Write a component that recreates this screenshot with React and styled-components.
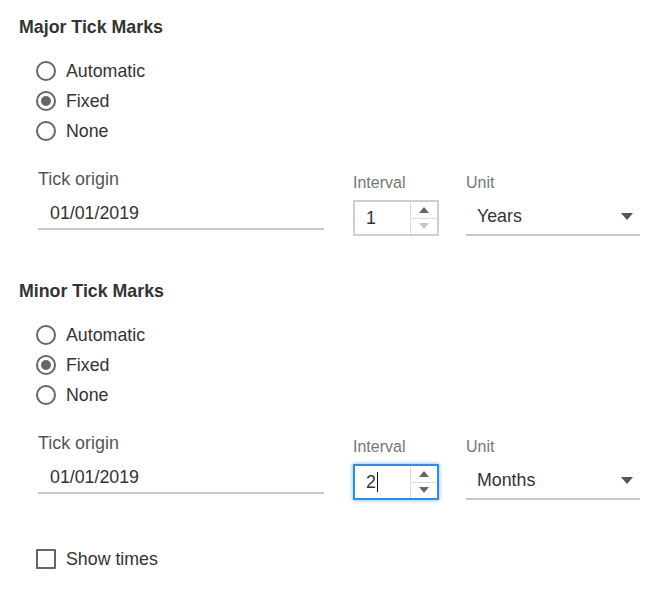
import React from 'react';
import styled, { createGlobalStyle } from 'styled-components';

const GlobalStyle = createGlobalStyle`
  body {
    margin: 0;
    background: #fff;
    font-family: "Liberation Sans", Arial, sans-serif;
    color: #333;
  }
`;

const Page = styled.div`
  padding: 17px 0 0 19px;
  width: 661px;
  box-sizing: border-box;
`;

const Section = styled.section`
  margin-bottom: ${(p) => p.$gap || 0}px;
`;

const Title = styled.div`
  font-size: 17.8px;
  font-weight: bold;
  line-height: 20px;
  color: #333;
`;

const RadioGroup = styled.div`
  display: flex;
  flex-direction: column;
  padding: 19px 0 0 17px;
`;

const OptionRow = styled.label`
  display: flex;
  align-items: center;
  height: 30px;
  gap: 10px;
  font-size: 17.8px;
  color: #333;
`;

const RadioCircle = styled.span`
  width: 20px;
  height: 20px;
  box-sizing: border-box;
  border: 2px solid #666;
  border-radius: 50%;
  display: flex;
  align-items: center;
  justify-content: center;
  &::after {
    content: '';
    width: 10px;
    height: 10px;
    border-radius: 50%;
    background: ${(p) => (p.$checked ? '#666' : 'transparent')};
  }
`;

const CheckBox = styled.span`
  width: 20px;
  height: 20px;
  box-sizing: border-box;
  border: 2px solid #666;
  border-radius: 1px;
`;

const FieldRow = styled.div`
  display: flex;
  align-items: flex-start;
  padding-left: 19px;
`;

const Field = styled.div`
  display: flex;
  flex-direction: column;
  width: ${(p) => p.$width}px;
  margin-left: ${(p) => p.$left || 0}px;
  margin-top: ${(p) => p.$top}px;
`;

const FieldLabel = styled.div`
  line-height: 20px;
  font-size: ${(p) => (p.$small ? '16px' : '17.9px')};
  color: ${(p) => (p.$small ? '#777' : '#555')};
  margin-bottom: 7px;
`;

const TextInput = styled.div`
  height: 34px;
  box-sizing: border-box;
  border-bottom: 2px solid #c8c8c8;
  padding: 2px 0 0 12px;
  display: flex;
  align-items: center;
  font-size: 17.8px;
  color: #333;
`;

const Spin = styled.div`
  height: 36px;
  box-sizing: border-box;
  display: flex;
  border: 2px solid ${(p) => (p.$focused ? '#2f8ee3' : '#cfcfcf')};
  box-shadow: ${(p) => (p.$focused ? '0 0 4px rgba(47,142,227,0.7)' : 'none')};
`;

const SpinValue = styled.div`
  flex: 1;
  display: flex;
  align-items: center;
  padding-left: 11px;
  font-size: 17.8px;
  color: #333;
`;

const Caret = styled.span`
  display: inline-block;
  width: 1px;
  height: 20px;
  background: #111;
  margin-left: 1px;
`;

const SpinButtons = styled.div`
  width: 26px;
  display: flex;
  flex-direction: column;
  border-left: 1px solid #ddd;
`;

const SpinButton = styled.div`
  flex: 1;
  display: flex;
  align-items: center;
  justify-content: center;
  & + & {
    border-top: 1px solid #ddd;
  }
`;

const Select = styled.div`
  height: 36px;
  box-sizing: border-box;
  border-bottom: 2px solid #c8c8c8;
  display: flex;
  align-items: center;
  justify-content: space-between;
  padding: 0 7px 2px 11px;
  font-size: 17.8px;
  color: #333;
`;

const Triangle = ({ up, color, w = 10, h = 6 }) => (
  <svg width={w} height={h} viewBox={`0 0 ${w} ${h}`}>
    <polygon
      points={up ? `0,${h} ${w / 2},0 ${w},${h}` : `0,0 ${w},0 ${w / 2},${h}`}
      fill={color}
    />
  </svg>
);

const TickSection = ({ title, interval, unit, downDisabled, focused, gap }) => (
  <Section $gap={gap}>
    <Title>{title}</Title>
    <RadioGroup>
      {['Automatic', 'Fixed', 'None'].map((o) => (
        <OptionRow key={o}>
          <RadioCircle $checked={o === 'Fixed'} />
          {o}
        </OptionRow>
      ))}
    </RadioGroup>
    <FieldRow>
      <Field $width={286} $top={23}>
        <FieldLabel>Tick origin</FieldLabel>
        <TextInput>01/01/2019</TextInput>
      </Field>
      <Field $width={86} $left={29} $top={27}>
        <FieldLabel $small>Interval</FieldLabel>
        <Spin $focused={focused}>
          <SpinValue>
            {interval}
            {focused && <Caret />}
          </SpinValue>
          <SpinButtons>
            <SpinButton>
              <Triangle up color="#666" />
            </SpinButton>
            <SpinButton>
              <Triangle color={downDisabled ? '#c4c4c4' : '#666'} />
            </SpinButton>
          </SpinButtons>
        </Spin>
      </Field>
      <Field $width={174} $left={27} $top={27}>
        <FieldLabel $small>Unit</FieldLabel>
        <Select>
          {unit}
          <Triangle color="#555" w={12} h={7} />
        </Select>
      </Field>
    </FieldRow>
  </Section>
);

const CheckRow = styled(OptionRow)`
  padding-left: 17px;
`;

export default function App() {
  return (
    <Page>
      <GlobalStyle />
      <TickSection
        title="Major Tick Marks"
        interval="1"
        unit="Years"
        downDisabled
        gap={45}
      />
      <TickSection
        title="Minor Tick Marks"
        interval="2"
        unit="Months"
        focused
        gap={44}
      />
      <CheckRow>
        <CheckBox />
        Show times
      </CheckRow>
    </Page>
  );
}
